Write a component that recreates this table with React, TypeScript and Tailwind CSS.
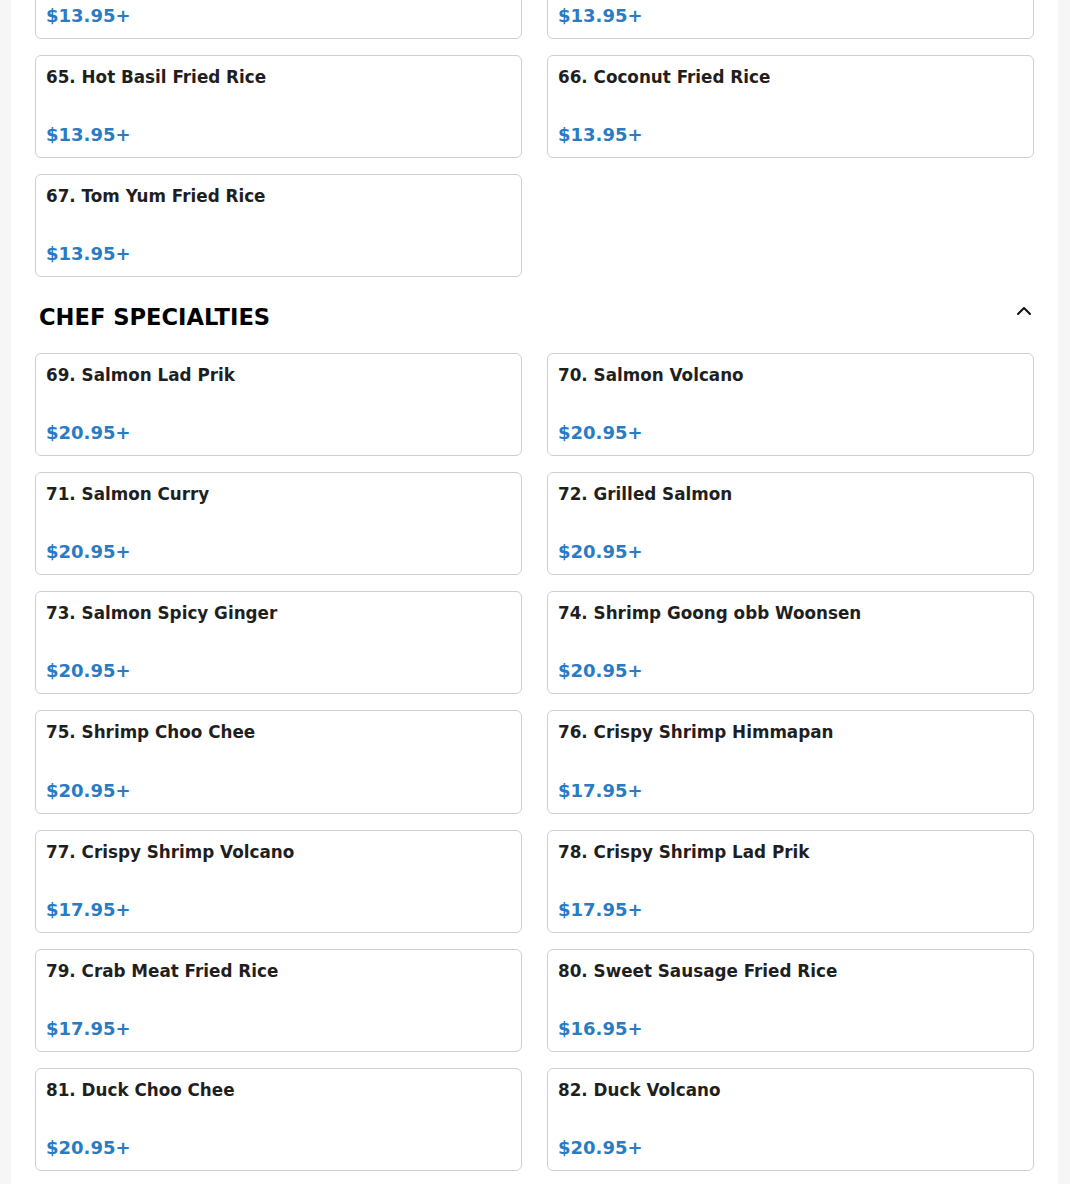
import React from 'react';

interface MenuItem {
  name: string;
  price: string;
}

interface Section {
  title?: string;
  items: MenuItem[];
}

const sections: Section[] = [
  {
    items: [
      { name: '63. Pineapple Fried Rice', price: '$13.95+' },
      { name: '64. Green Curry Fried Rice', price: '$13.95+' },
      { name: '65. Hot Basil Fried Rice', price: '$13.95+' },
      { name: '66. Coconut Fried Rice', price: '$13.95+' },
      { name: '67. Tom Yum Fried Rice', price: '$13.95+' },
    ],
  },
  {
    title: 'CHEF SPECIALTIES',
    items: [
      { name: '69. Salmon Lad Prik', price: '$20.95+' },
      { name: '70. Salmon Volcano', price: '$20.95+' },
      { name: '71. Salmon Curry', price: '$20.95+' },
      { name: '72. Grilled Salmon', price: '$20.95+' },
      { name: '73. Salmon Spicy Ginger', price: '$20.95+' },
      { name: '74. Shrimp Goong obb Woonsen', price: '$20.95+' },
      { name: '75. Shrimp Choo Chee', price: '$20.95+' },
      { name: '76. Crispy Shrimp Himmapan', price: '$17.95+' },
      { name: '77. Crispy Shrimp Volcano', price: '$17.95+' },
      { name: '78. Crispy Shrimp Lad Prik', price: '$17.95+' },
      { name: '79. Crab Meat Fried Rice', price: '$17.95+' },
      { name: '80. Sweet Sausage Fried Rice', price: '$16.95+' },
      { name: '81. Duck Choo Chee', price: '$20.95+' },
      { name: '82. Duck Volcano', price: '$20.95+' },
    ],
  },
];

const ItemCard = ({ item }: { item: MenuItem }) => (
  <div className="h-[103.2px] flex flex-col justify-between border border-[#cfcfcf] rounded-[6px] bg-white px-[10px] pt-[9px] pb-[10px]">
    <h3 className="text-[16.8px] leading-[24px] font-bold text-[#1f1f1f]">{item.name}</h3>
    <p className="text-[18px] leading-[24px] font-bold text-[#2a7bc4]">{item.price}</p>
  </div>
);

const App = () => {
  return (
    <div className="min-h-screen bg-[#f6f6f6] overflow-hidden" style={{ fontFamily: '"DejaVu Sans", sans-serif' }}>
      <div className="ml-[11px] mr-[12px] bg-white pl-[24px] pr-[24px] -mt-[64.2px] pb-[40px]">
        {sections.map((section, i) => (
          <div key={i}>
            {section.title && (
              <div className="flex items-center justify-between pl-[4px] pr-[2px] pt-[24px] pb-[19.5px]">
                <h2 className="text-[22.6px] leading-[32px] font-bold text-black">{section.title}</h2>
                <svg width="24" height="24" viewBox="0 0 24 24" fill="none" stroke="#111" strokeWidth="2" strokeLinecap="round" strokeLinejoin="round" className="-mt-[13px] -mr-[4px]">
                  <path d="M6 15l6-6 6 6" />
                </svg>
              </div>
            )}
            <div className="grid grid-cols-2 gap-x-[25px] gap-y-[16px]">
              {section.items.map((item) => (
                <ItemCard key={item.name} item={item} />
              ))}
            </div>
          </div>
        ))}
      </div>
    </div>
  );
};

export default App;
